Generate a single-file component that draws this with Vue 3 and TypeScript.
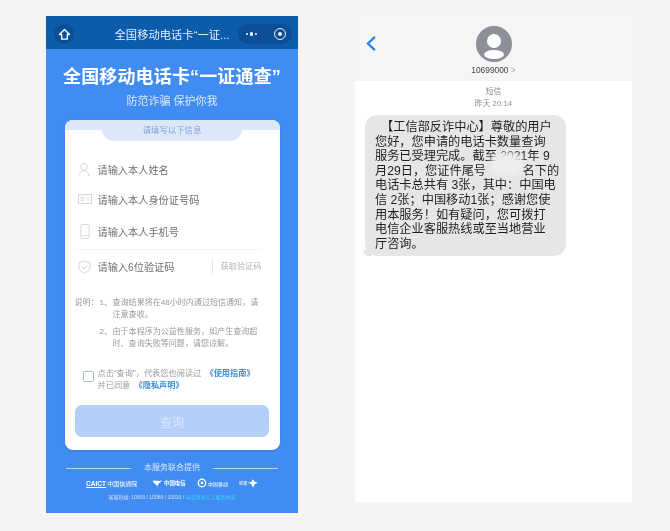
<script setup lang="ts">
const lines: string[] = [
  '　【工信部反诈中心】尊敬的用户',
  '您好，您申请的电话卡数量查询',
  '服务已受理完成。截至 2021年 9',
  '月29日，您证件尾号　　　名下的',
  '电话卡总共有 3张，其中：中国电',
  '信 2张；中国移动1张；感谢您使',
  '用本服务！如有疑问，您可拨打',
  '电信企业客服热线或至当地营业',
  '厅咨询。',
]
const fields = [
  { key: 'user', text: '请输入本人姓名' },
  { key: 'id', text: '请输入本人身份证号码' },
  { key: 'phone', text: '请输入本人手机号' },
]
</script>

<template>
  <div class="page">
    <section class="phone">
      <header class="nav">
        <div class="home">
          <svg viewBox="0 0 14 14" width="13" height="13" fill="none" stroke="#fff" stroke-width="1.4" stroke-linejoin="round">
            <path d="M7 1.6 L12.4 7 H10 V12 H4 V7 H1.6 Z" />
          </svg>
        </div>
        <div class="nav-title">全国移动电话卡“一证...</div>
        <div class="capsule">
          <span class="dots"><i></i><i class="big"></i><i></i></span>
          <span class="target"><i></i></span>
        </div>
      </header>

      <div class="hero">
        <h1>全国移动电话卡“一证通查”</h1>
        <p>防范诈骗 保护你我</p>
      </div>

      <div class="card">
        <div class="card-top"><div class="tab">请填写以下信息</div></div>
        <div class="fields">
          <div v-for="f in fields" :key="f.key" class="field">
            <span class="ficon">
              <svg v-if="f.key === 'user'" viewBox="0 0 14 16" width="13" height="15" fill="none" stroke="#d5d5d5" stroke-width="1">
                <circle cx="6.5" cy="5" r="3.6" />
                <path d="M1 14.5 C1 11 3.5 9.5 6.5 9.5 C8 9.5 9.5 10 10.5 11" />
                <circle cx="11.5" cy="13.5" r="1.2" fill="#d5d5d5" stroke="none" />
              </svg>
              <svg v-else-if="f.key === 'id'" viewBox="0 0 14 10" width="14" height="10" fill="none" stroke="#d5d5d5" stroke-width="1">
                <rect x="0.5" y="0.5" width="13" height="9" />
                <path d="M2.5 3.5 H6.5 M2.5 5 H6.5 M2.5 6.5 H6.5 M8.5 4 H11.5 M8.5 6 H11.5" stroke-width="0.8" />
              </svg>
              <svg v-else viewBox="0 0 10 16" width="10" height="15" fill="none" stroke="#d5d5d5" stroke-width="1">
                <rect x="0.5" y="0.5" width="9" height="15" rx="1.2" />
                <path d="M0.5 12.5 H9.5" />
              </svg>
            </span>
            <span class="ftext">{{ f.text }}</span>
          </div>
          <div class="field last">
            <span class="ficon">
              <svg viewBox="0 0 13 14" width="13" height="14" fill="none" stroke="#d5d5d5" stroke-width="1" stroke-linejoin="round">
                <path d="M6.5 1 L12 2.8 V7 C12 10 9.5 12.2 6.5 13.2 C3.5 12.2 1 10 1 7 V2.8 Z" />
                <path d="M4 7 L6 9 L9.2 5.4" />
              </svg>
            </span>
            <span class="ftext grow">请输入6位验证码</span>
            <span class="getcode">获取验证码</span>
          </div>
        </div>

        <div class="notes">
          <span class="nlabel">说明：</span>
          <div class="nlist">
            <div class="nitem"><span class="nnum">1、</span><span class="nbody">查询结果将在48小时内通过短信通知，请注意查收。</span></div>
            <div class="nitem"><span class="nnum">2、</span><span class="nbody">由于本程序为公益性服务，如产生查询超时、查询失败等问题，请您谅解。</span></div>
          </div>
        </div>

        <div class="agree">
          <span class="check"></span>
          <div class="agree-text">
            <div>点击“查询”，代表您也阅读过 <b>《使用指南》</b></div>
            <div>并已同意 <b>《隐私声明》</b></div>
          </div>
        </div>

        <button class="query" type="button">查询</button>
      </div>

      <footer class="foot">
        <div class="provider"><span class="rule"></span><span>本服务联合提供</span><span class="rule"></span></div>
        <div class="logos">
          <span class="logo-a"><b>CAICT</b> 中国信通院</span>
          <span class="logo-b">
            <svg viewBox="0 0 14 10" width="11" height="9" fill="#fff"><path d="M1 2 C4 0 8 3 13 1 C10 5 8 4 7 9 C6 6 3 6 1 2 Z" /></svg>
            <b>中国电信</b>
          </span>
          <span class="logo-c">
            <svg viewBox="0 0 12 12" width="10" height="10" fill="none" stroke="#fff"><circle cx="6" cy="6" r="4.5" stroke-width="1.6" /><circle cx="6" cy="6" r="1.6" fill="#fff" stroke="none" /></svg>
            <span>中国移动</span>
          </span>
          <span class="logo-d">
            <small>联通</small>
            <svg viewBox="0 0 12 10" width="10" height="9" fill="#fff"><path d="M6 0 L8 3 L12 4 L8 6 L6 10 L4 6 L0 4 L4 3 Z" /></svg>
          </span>
        </div>
        <div class="hotline">客服热线: 10000 / 10086 / 10010 / <em>电话咨询人工服务时间</em></div>
      </footer>
    </section>

    <section class="sms">
      <header class="sms-head">
        <svg class="back" viewBox="0 0 11 16" width="10" height="15" fill="none" stroke="#2f80ea" stroke-width="2.6" stroke-linecap="round" stroke-linejoin="round">
          <path d="M9 1.5 L2 8 L9 14.5" />
        </svg>
        <div class="contact">
          <svg viewBox="0 0 36 36" width="36" height="36">
            <circle cx="18" cy="18" r="18" fill="#8d9099" />
            <circle cx="18" cy="15" r="7" fill="#fff" />
            <ellipse cx="18" cy="28.5" rx="10" ry="4.5" fill="#fff" />
          </svg>
          <div class="number">10699000 <span>&gt;</span></div>
        </div>
      </header>
      <div class="thread">
        <div class="stamp">短信<br />昨天 20:14</div>
        <div class="bubble">
          <div v-for="(l, i) in lines" :key="i" class="bline">{{ l }}</div>
          <span class="smudge"></span>
          <span class="tail"></span>
        </div>
      </div>
    </section>
  </div>
</template>

<style>
html, body { margin: 0; background: #f5f4f3; }
</style>

<style scoped>
* { box-sizing: border-box; }
.page {
  width: 670px;
  height: 531px;
  display: flex;
  align-items: flex-start;
  padding: 16px 38px 0 46px;
  gap: 57px;
  overflow: hidden;
  font-family: "Liberation Sans", "Noto Sans CJK SC", sans-serif;
  background: #f5f4f3;
}
.phone {
  width: 252px;
  height: 497px;
  background: #418cf3;
  display: flex;
  flex-direction: column;
  align-items: center;
  flex: none;
  filter: blur(.3px);
}
.nav {
  width: 100%;
  height: 33px;
  background: #0c5cab;
  display: flex;
  align-items: center;
  padding: 3px 6px 0 8px;
  color: #fff;
  flex: none;
}
.home {
  width: 20px;
  height: 20px;
  border-radius: 50%;
  background: #0a4f96;
  display: flex;
  align-items: center;
  justify-content: center;
  flex: none;
}
.nav-title {
  flex: 1;
  text-align: center;
  font-size: 11.3px;
  white-space: nowrap;
  padding-left: 32px;
  color: #e6eff8;
}
.capsule {
  width: 54px;
  height: 20px;
  border-radius: 10px;
  background: #0a4f96;
  display: flex;
  align-items: center;
  justify-content: space-between;
  padding: 0 6px 0 8px;
  flex: none;
}
.dots { display: flex; align-items: center; gap: 1.5px; }
.dots i { width: 2.4px; height: 2.4px; border-radius: 50%; background: #fff; }
.dots i.big { width: 3.6px; height: 3.6px; }
.target {
  width: 12px;
  height: 12px;
  border: 1.2px solid #e6eff8;
  border-radius: 50%;
  display: flex;
  align-items: center;
  justify-content: center;
}
.target i { width: 4px; height: 4px; border-radius: 50%; background: #e6eff8; }
.hero { text-align: center; color: #fff; padding-top: 16px; flex: none; }
.hero h1 {
  margin: 0;
  font-size: 18px;
  line-height: 24px;
  font-weight: 700;
  white-space: nowrap;
  letter-spacing: .15px;
}
.hero p {
  margin: 4px 0 0;
  font-size: 11px;
  line-height: 16px;
  color: #dbe9fc;
}
.card {
  width: 215px;
  height: 330px;
  margin-top: 11px;
  background: #fff;
  border-radius: 8px;
  overflow: hidden;
  flex: none;
  display: flex;
  flex-direction: column;
  box-shadow: 0 1px 2px rgba(0, 50, 120, .18);
}
.card-top {
  height: 10px;
  background: #dce8fa;
  display: flex;
  justify-content: center;
  flex: none;
}
.tab {
  width: 140px;
  height: 21px;
  background: #dce8fa;
  border-radius: 0 0 12px 12px;
  text-align: center;
  font-size: 8.4px;
  line-height: 21px;
  color: #7fa4d6;
  flex: none;
}
.fields { padding: 24px 18px 0 10px; flex: none; }
.field { height: 30px; display: flex; align-items: center; }
.field:nth-child(3) { height: 35px; }
.field.last {
  border-top: 1px solid #f5f5f5;
  height: 34px;
}
.ficon { width: 20px; display: flex; justify-content: center; margin-right: 3px; flex: none; }
.ftext { font-size: 10.2px; color: #6f6f6f; white-space: nowrap; }
.grow { flex: 1; }
.getcode {
  font-size: 8.2px;
  color: #b4b4b4;
  border-left: 1px solid #e8e8e8;
  padding-left: 8px;
  line-height: 16px;
  white-space: nowrap;
}
.notes {
  display: flex;
  padding: 14px 0 0 10px;
  font-size: 8.05px;
  line-height: 12px;
  color: #9a9a9a;
  flex: none;
}
.nlabel { width: 25px; flex: none; white-space: nowrap; }
.nlist { display: flex; flex-direction: column; gap: 5px; }
.nitem { display: flex; }
.nnum { width: 13px; flex: none; white-space: nowrap; }
.nbody { width: 150px; }
.agree { display: flex; padding: 18px 0 0 18px; flex: none; }
.check {
  width: 11px;
  height: 11px;
  border: 1.6px solid #9dbdf0;
  border-radius: 1.5px;
  margin: 3px 4px 0 0;
  flex: none;
}
.agree-text { font-size: 8.2px; line-height: 12px; color: #9a9a9a; white-space: nowrap; }
.agree-text b { color: #3f8fd8; font-weight: 700; margin-left: 2px; }
.query {
  width: 194px;
  height: 32px;
  margin: 13px auto 0;
  border: 0;
  border-radius: 7px;
  background: #b5d0f8;
  color: #d7e6fc;
  font-family: inherit;
  font-size: 12px;
  flex: none;
  padding: 0;
}
.foot { width: 100%; padding-top: 12px; color: #fff; flex: none; }
.provider {
  display: flex;
  align-items: center;
  justify-content: center;
  gap: 13px;
  font-size: 8px;
  line-height: 12px;
  color: #d9e8fc;
}
.rule { width: 65px; height: 1px; background: #bcd6fa; }
.logos {
  display: flex;
  align-items: center;
  height: 16px;
  margin-top: 1px;
  padding-left: 40px;
  font-size: 6px;
}
.logos > span { display: flex; align-items: center; gap: 1px; white-space: nowrap; flex: none; }
.logo-a { width: 66px; }
.logo-a b { font-size: 6.6px; text-decoration: underline; }
.logo-b { width: 45px; }
.logo-b b { font-size: 5.4px; }
.logo-c { width: 42px; font-size: 5px; }
.logo-d small { font-size: 4px; }
.hotline {
  text-align: center;
  font-size: 5px;
  line-height: 8px;
  margin-top: 2px;
  color: #cfe1fb;
  white-space: nowrap;
}
.hotline em { font-style: normal; color: #38dcf2; }
.sms {
  width: 277px;
  height: 486px;
  flex: none;
  display: flex;
  flex-direction: column;
  background: #f5f5f5;
  filter: blur(.3px);
}
.sms-head {
  height: 65px;
  padding-top: 10px;
  display: flex;
  justify-content: center;
  flex: none;
  position: relative;
}
.back { position: absolute; left: 11px; top: 20px; }
.contact { display: flex; flex-direction: column; align-items: center; }
.number {
  font-size: 8.4px;
  line-height: 10px;
  margin-top: 3px;
  color: #444;
}
.number span { color: #aaa; }
.thread { flex: 1; background: #fff; padding: 5px 0 0 10px; }
.stamp {
  text-align: center;
  width: 257px;
  font-size: 7.8px;
  line-height: 11.5px;
  color: #8e8e8e;
  margin-bottom: 6px;
}
.bubble {
  position: relative;
  width: 201px;
  height: 141px;
  border-radius: 12px;
  background: #e6e6e7;
  padding: 5px 6px 0 10px;
  font-size: 12.2px;
  line-height: 14.6px;
  color: #1e1e1e;
}
.bline { white-space: nowrap; }
.smudge {
  position: absolute;
  left: 125px;
  top: 37px;
  width: 34px;
  height: 24px;
  border-radius: 50%;
  background: #eceef0;
  filter: blur(3px);
}
.tail {
  position: absolute;
  left: -2px;
  bottom: 0;
  width: 8px;
  height: 6px;
  background: #e6e6e7;
  border-radius: 0 0 0 6px;
}
</style>
